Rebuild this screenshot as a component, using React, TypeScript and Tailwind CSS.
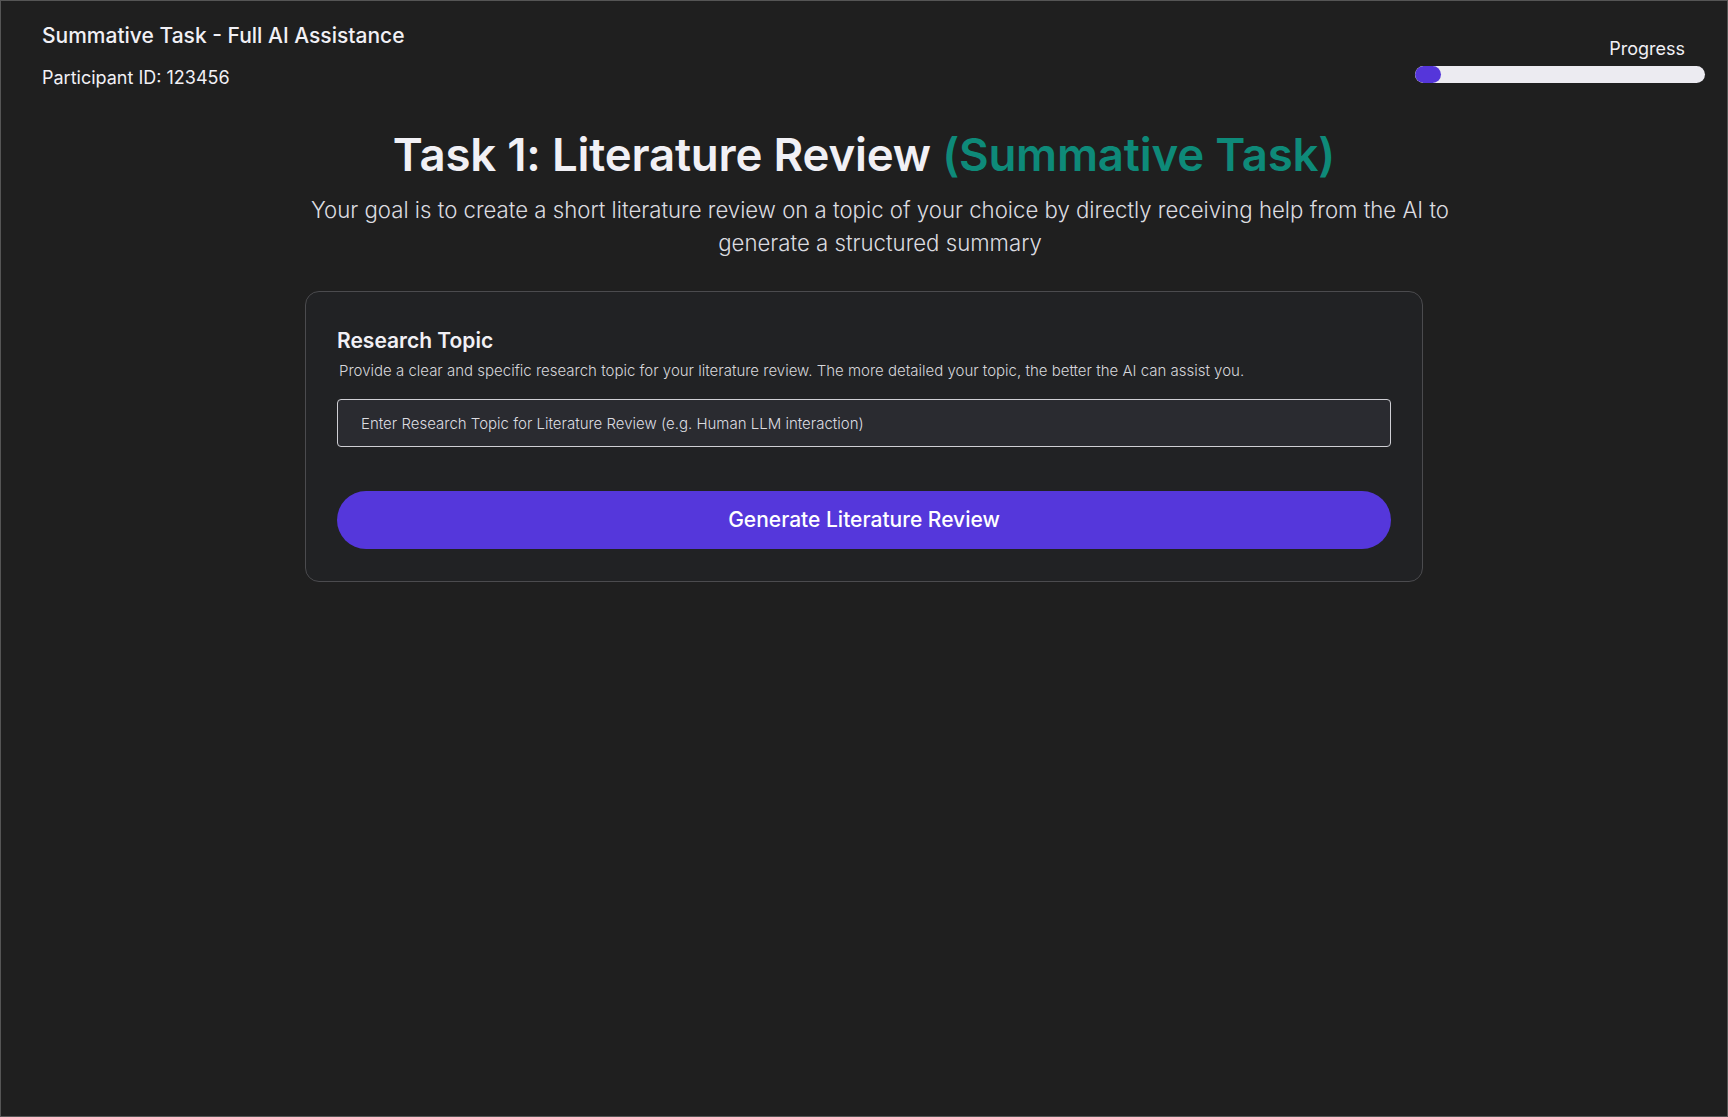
import React from 'react';

const App: React.FC = () => {
    const progress = 9;

    return (
        <div className="h-screen w-full bg-[#1f1f1f] border border-[#555] text-[#f1f0f5] overflow-hidden" style={{ fontFamily: 'Inter, "Noto Sans", sans-serif' }}>
            {/* Header */}
            <header className="flex justify-between items-start pl-[41px] pr-[22px] pt-[21px]">
                <div>
                    <h2 className="text-[21px] leading-[28px] font-medium">Summative Task - Full AI Assistance</h2>
                    <p className="mt-[14px] text-[18px] leading-[28px]">Participant ID: 123456</p>
                </div>
                <div className="flex flex-col items-end pt-[13px]">
                    <span className="text-[18px] leading-[28px] pr-[20px]">Progress</span>
                    <div className="mt-[3px] w-[290px] h-[17px] rounded-full bg-[#ecebf1] overflow-hidden">
                        <div className="h-full rounded-full bg-[#5536da]" style={{ width: `${progress}%` }} />
                    </div>
                </div>
            </header>

            {/* Main */}
            <main className="flex flex-col items-center">
                <h1 className="mt-[39px] text-[45.6px] leading-[48px] font-semibold tracking-[-0.2px]">
                    Task 1: Literature Review <span className="text-[#0e8a79]">(Summative Task)</span>
                </h1>
                <p className="mt-[14px] ml-[32px] max-w-[1150px] text-center text-[22.2px] leading-[33px] font-light text-[#dcdce0]">
                    Your goal is to create a short literature review on a topic of your choice by directly receiving help from the AI to generate a structured summary
                </p>

                {/* Card */}
                <section className="mt-[32px] w-[1118px] rounded-[14px] border border-[#4b4b4e] bg-[#212224] px-[31px] pt-[35px] pb-[32px]">
                    <h3 className="text-[21px] leading-[28px] font-semibold">Research Topic</h3>
                    <p className="mt-[6px] pl-[2px] text-[15px] leading-[20px] font-light text-[#d6d6da]">
                        Provide a clear and specific research topic for your literature review. The more detailed your topic, the better the AI can assist you.
                    </p>
                    <input
                        type="text"
                        placeholder="Enter Research Topic for Literature Review (e.g. Human LLM interaction)"
                        className="mt-[18px] w-full h-[48px] rounded-[4px] border border-[#cfcfd4] bg-[#2a2b30] px-[23px] text-[15px] font-light text-[#e6e6ea] placeholder:text-[#dcdce0] outline-none"
                    />
                    <button className="mt-[44px] w-full h-[58px] rounded-full bg-[#5537db] text-[21px] font-medium text-white">
                        Generate Literature Review
                    </button>
                </section>
            </main>
        </div>
    );
};

export default App;
